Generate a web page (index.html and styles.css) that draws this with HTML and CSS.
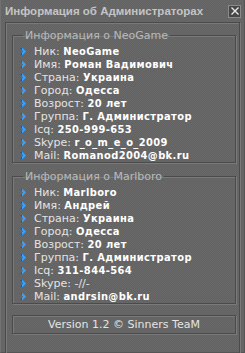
FILE: index.html
```html
<!DOCTYPE html>
<html lang="ru">
<head>
  <meta charset="UTF-8">
  <title>Информация об Администраторах</title>
  <link rel="stylesheet" href="styles.css">
</head>
<body>
  <div class="window">
    <div class="titlebar">
      <span class="title">Информация об Администраторах</span>
      <span class="close">
        <svg width="8" height="8" viewBox="0 0 8 8"><path d="M0.5 0.5 L7.5 7.5 M7.5 0.5 L0.5 7.5" stroke="#e8e8e8" stroke-width="1.4"/></svg>
      </span>
    </div>

    <div class="panel">
      <fieldset class="group">
        <legend>Информация о NeoGame</legend>
        <ul class="info">
          <li><i class="bullet"></i>Ник: <b>NeoGame</b></li>
          <li><i class="bullet"></i>Имя: <b>Роман Вадимович</b></li>
          <li><i class="bullet"></i>Страна: <b>Украина</b></li>
          <li><i class="bullet"></i>Город: <b>Одесса</b></li>
          <li><i class="bullet"></i>Возрост: <b>20 лет</b></li>
          <li><i class="bullet"></i>Группа: <b>Г. Администратор</b></li>
          <li><i class="bullet"></i>Icq: <b>250-999-653</b></li>
          <li><i class="bullet"></i>Skype: <b>r_o_m_e_o_2009</b></li>
          <li><i class="bullet"></i>Mail: <b>Romanod2004@bk.ru</b></li>
        </ul>
      </fieldset>

      <fieldset class="group">
        <legend>Информация о Marlboro</legend>
        <ul class="info">
          <li><i class="bullet"></i>Ник: <b>Marlboro</b></li>
          <li><i class="bullet"></i>Имя: <b>Андрей</b></li>
          <li><i class="bullet"></i>Страна: <b>Украина</b></li>
          <li><i class="bullet"></i>Город: <b>Одесса</b></li>
          <li><i class="bullet"></i>Возрост: <b>20 лет</b></li>
          <li><i class="bullet"></i>Группа: <b>Г. Администратор</b></li>
          <li><i class="bullet"></i>Icq: <b>311-844-564</b></li>
          <li><i class="bullet"></i>Skype: -//-</li>
          <li><i class="bullet"></i>Mail: <b>andrsin@bk.ru</b></li>
        </ul>
      </fieldset>

      <div class="version">Version 1.2 © Sinners TeaM</div>
    </div>
  </div>
</body>
</html>
```

FILE: styles.css
```css
/* Base */
body {
  margin: 0;
  font-family: "DejaVu Sans", Verdana, sans-serif;
  font-size: 11px;
  line-height: 13px;
  color: #e4e4e4;
}

.window {
  width: 245px;
  height: 353px;
  box-sizing: border-box;
  padding-bottom: 5px;
  background: repeating-conic-gradient(#686868 0 25%, #636363 0 50%) 0 0 / 2px 2px;
  border-left: 1px solid #727272;
  border-right: 1px solid #555;
  border-bottom: 1px solid #555;
}

/* Title bar */
.titlebar {
  height: 22px;
  display: flex;
  align-items: center;
  justify-content: space-between;
  padding: 0 3px 0 4px;
}

.title {
  font-family: "Liberation Sans", Arial, sans-serif;
  font-size: 11.5px;
  font-weight: bold;
  color: #c4c4c4;
  white-space: nowrap;
}

.close {
  flex-shrink: 0;
  width: 11px;
  height: 11px;
  display: flex;
  align-items: center;
  justify-content: center;
  background: #474747;
  border: 1px solid #8a8a8a;
}

/* Etched frames */
.panel,
.group,
.version {
  border: 1px solid #4b4b4b;
  box-shadow: 1px 1px 0 #7a7a7a, inset 1px 1px 0 #7a7a7a;
}

.panel {
  height: 326px;
  margin: 0 4px 0 4px;
  padding: 6px 3px 0 6px;
  display: flex;
  flex-direction: column;
  gap: 7px;
}

.group {
  margin: 0;
  padding: 3px 4px 0 6px;
  min-inline-size: 0;

  & legend {
    padding: 0 2px;
    margin-left: 4px;
    color: #bababa;
  }
}

.info {
  list-style: none;
  margin: 0;
  padding: 0;

  & li {
    display: flex;
    align-items: center;
    height: 13px;
    white-space: pre;
  }

  & b {
    font-family: "DejaVu Sans Condensed", "DejaVu Sans", sans-serif;
    letter-spacing: 0.4px;
    color: #fff;
  }
}

/* Blue chevron: dark left edge, bright face */
.bullet {
  flex-shrink: 0;
  width: 6px;
  height: 7px;
  margin: 0 8px 0 1px;
  background: linear-gradient(to right, #1c5a9e 0 35%, #35a2ff 35%);
  clip-path: polygon(0 0, 45% 0, 100% 50%, 45% 100%, 0 100%, 50% 50%);
}

.version {
  margin-top: 4px;
  height: 17px;
  display: flex;
  align-items: center;
  justify-content: center;
}
```
